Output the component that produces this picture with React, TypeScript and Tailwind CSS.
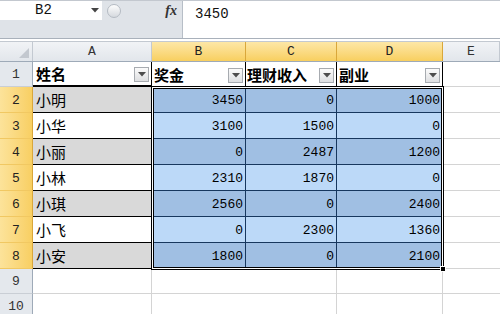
const cjk = { fontFamily: '"Noto Sans CJK SC", "Noto Sans", sans-serif' };
const mono = { fontFamily: '"Liberation Mono", "DejaVu Sans Mono", monospace' };

const rows: [string, number, number, number][] = [
  ["小明", 3450, 0, 1000],
  ["小华", 3100, 1500, 0],
  ["小丽", 0, 2487, 1200],
  ["小林", 2310, 1870, 0],
  ["小琪", 2560, 0, 2400],
  ["小飞", 0, 2300, 1360],
  ["小安", 1800, 0, 2100],
];

function FilterButton() {
  return (
    <div className="ml-auto mr-[2px] flex h-[15px] w-[15px] shrink-0 items-center justify-center border border-[#a7abb0] bg-gradient-to-b from-[#fbfbfb] to-[#dedfe1]">
      <svg width="8" height="5" viewBox="0 0 8 5">
        <path d="M0 0h8L4 4.5z" fill="#4d4d4d" />
      </svg>
    </div>
  );
}

function RowHeader({ n, active }: { n: number; active?: boolean }) {
  return (
    <div
      className={
        active
          ? "flex w-[33px] shrink-0 items-end justify-center border-b border-r border-b-[#f1c862] border-r-[#d9a73a] bg-gradient-to-r from-[#fce39a] to-[#f8cf62] pb-[2px] text-[13px] text-[#222]"
          : "flex w-[33px] shrink-0 items-end justify-center border-b border-r border-b-[#c9ced5] border-r-[#9eaab8] bg-[#e4e8ed] pb-[2px] text-[13px] text-[#333]"
      }
      style={mono}
    >
      {n}
    </div>
  );
}

function ColHeader({ label, w, active }: { label: string; w?: string; active?: boolean }) {
  return (
    <div
      className={
        (active
          ? "border-r-[#d9a73a] bg-gradient-to-b from-[#fde7a6] to-[#f8cf5e] text-[#222] "
          : "border-r-[#c3c9d1] bg-gradient-to-b from-[#f1f3f6] to-[#e2e6eb] text-[#333] ") +
        "flex items-center justify-center border-r text-[13px] " +
        (w ?? "")
      }
      style={mono}
    >
      {label}
    </div>
  );
}

export default function App() {
  return (
    <div className="relative h-[314px] w-[500px] overflow-hidden bg-white">
      {/* formula bar */}
      <div className="flex h-[39px] border-b border-t border-b-[#a9b1bb] border-t-[#c3c8cf]">
        <div className="flex w-[182px] flex-col bg-[#dfe3e8]">
          <div className="flex h-[19px] items-center">
            <div className="flex h-full w-[102px] items-center bg-white pl-[35px] text-[14px] text-[#111]" style={mono}>
              B2
              <svg className="ml-auto mr-[3px]" width="8" height="5" viewBox="0 0 8 5">
                <path d="M0 0h8L4 4.5z" fill="#444" />
              </svg>
            </div>
            <div className="ml-[5px] h-[14px] w-[14px] rounded-full border border-[#b5bbc3] bg-gradient-to-b from-[#fdfdfd] to-[#d5d9de]" />
            <span
              className="ml-auto mr-[5px] text-[14px] font-bold italic text-[#333]"
              style={{ fontFamily: '"Liberation Serif", serif' }}
            >
              fx
            </span>
          </div>
        </div>
        <div className="flex flex-1 border-l border-[#b7bec7] pl-[12px] pt-[3px] text-[14px] text-[#111]" style={mono}>
          3450
        </div>
      </div>
      <div className="h-[2px]" />

      {/* column headers */}
      <div className="flex h-[21px] border-b border-t border-b-[#9eaab8] border-t-[#c3c9d1]">
        <div className="relative w-[33px] border-r border-[#c3c9d1] bg-gradient-to-b from-[#f1f3f6] to-[#e2e6eb]">
          <svg className="absolute bottom-[3px] right-[3px]" width="10" height="10" viewBox="0 0 10 10">
            <path d="M10 0v10H0z" fill="#c3c8cf" />
          </svg>
        </div>
        <ColHeader label="A" w="w-[119px]" />
        <ColHeader label="B" w="w-[94px]" active />
        <ColHeader label="C" w="w-[91px]" active />
        <ColHeader label="D" w="w-[106px]" active />
        <ColHeader label="E" w="flex-1" />
      </div>

      {/* row 1: table header */}
      <div className="flex h-[25px]">
        <RowHeader n={1} />
        <div className="flex w-[119px] items-center border-b-2 border-r border-black pl-[3px] pt-[2px] text-[15px] font-bold text-black" style={cjk}>
          姓名
          <FilterButton />
        </div>
        <div className="flex w-[94px] items-center border-r border-black pl-[2px] pt-[2px] text-[15px] font-bold text-black" style={cjk}>
          奖金
          <FilterButton />
        </div>
        <div className="flex w-[91px] items-center border-r border-black pl-[1px] pt-[2px] text-[15px] font-bold text-black" style={cjk}>
          理财收入
          <FilterButton />
        </div>
        <div className="flex w-[106px] items-center border-r border-black pl-[2px] pt-[2px] text-[15px] font-bold text-black" style={cjk}>
          副业
          <FilterButton />
        </div>
        <div className="flex-1 border-b border-[#d4d4d4]" />
      </div>

      {/* data rows */}
      {rows.map(([name, b, c, d], i) => {
        const shaded = i % 2 === 0;
        const blue = shaded ? "bg-[#a0bfe3]" : "bg-[#bcd9f8]";
        return (
          <div key={name} className="flex h-[26px]">
            <RowHeader n={i + 2} active />
            <div
              className={
                "flex w-[119px] items-center border-b border-black pl-[3px] pt-[2px] text-[15px] text-black " +
                (shaded ? "bg-[#d9d9d9]" : "bg-white")
              }
              style={cjk}
            >
              {name}
            </div>
            {[b, c, d].map((v, j) => (
              <div
                key={j}
                className={
                  "flex items-center justify-end border-b border-r border-[#17375e] pr-[2px] pt-[3px] text-[13px] text-black " +
                  blue +
                  " " +
                  (j === 0 ? "w-[94px]" : j === 1 ? "w-[91px]" : "w-[106px]")
                }
                style={mono}
              >
                {v}
              </div>
            ))}
            <div className="flex-1 border-b border-[#d4d4d4]" />
          </div>
        );
      })}

      {/* empty rows */}
      {[9, 10].map((n) => (
        <div key={n} className="flex h-[25px]">
          <RowHeader n={n} />
          <div className="w-[119px] border-b border-r border-[#d4d4d4]" />
          <div className="w-[94px] border-b border-[#d4d4d4]" />
          <div className="w-[91px] border-b border-r border-[#d4d4d4]" />
          <div className="w-[106px] border-b border-r border-[#d4d4d4]" />
          <div className="flex-1 border-b border-[#d4d4d4]" />
        </div>
      ))}

      {/* selection B2:D8 */}
      <div className="pointer-events-none absolute left-[151px] top-[86px] h-[184px] w-[293px] border border-black shadow-[inset_0_0_0_1px_#fff,inset_0_0_0_2px_#000]" />
      <div className="absolute left-[440px] top-[266px] h-[6px] w-[6px] border border-white bg-black" />
    </div>
  );
}
